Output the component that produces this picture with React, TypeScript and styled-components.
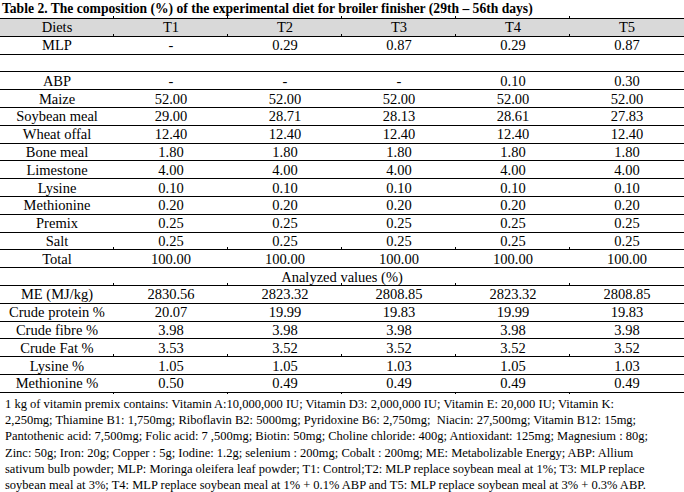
import React from "react";
import styled, { createGlobalStyle, css } from "styled-components";

const Global = createGlobalStyle`
  html, body { margin: 0; padding: 0; background: #ffffff; }
  body { font-family: "Liberation Serif", "Times New Roman", serif; color: #000; }
`;

const Page = styled.div`
  width: 684px;
  height: 492px;
  overflow: hidden;
  background: #fff;
`;

const Title = styled.div`
  height: 18px;
  padding-left: 2px;
  font-weight: bold;
  font-size: 13.6px;
  line-height: 17px;
  white-space: nowrap;
`;

const Table = styled.table`
  width: 684px;
  table-layout: fixed;
  border-collapse: collapse;
  font-size: 14.5px;
`;

const Row = styled.tr<{ $head?: boolean }>`
  height: 17.8px;
  background: ${(p) => (p.$head ? "#d9d9d9" : "transparent")};
`;

const tick = css`
  content: "";
  position: absolute;
  left: -1px;
  width: 1px;
  height: 2px;
  background: #000;
`;

const Cell = styled.td<{ $tickTop?: boolean; $tickBottom?: boolean }>`
  position: relative;
  border-top: 1px solid #000;
  border-bottom: 1px solid #000;
  padding: 0;
  text-align: center;
  vertical-align: middle;
  line-height: 16px;
  white-space: nowrap;

  &:not(:first-child)::before {
    ${(p) => (p.$tickTop ? tick : "")}
    top: -3px;
  }
  &:not(:first-child)::after {
    ${(p) => (p.$tickBottom ? tick : "")}
    bottom: -2px;
  }
`;

const Notes = styled.div`
  padding: 3px 0 0 5px;
  font-size: 12.5px;
  line-height: 16.3px;
  white-space: nowrap;
`;

const NoteLine = styled.div``;

type R = [string, ...string[]];

const top: R[] = [
  ["MLP", "-", "0.29", "0.87", "0.29", "0.87"],
  ["", "", "", "", "", ""],
  ["ABP", "-", "-", "-", "0.10", "0.30"],
  ["Maize", "52.00", "52.00", "52.00", "52.00", "52.00"],
  ["Soybean meal", "29.00", "28.71", "28.13", "28.61", "27.83"],
  ["Wheat offal", "12.40", "12.40", "12.40", "12.40", "12.40"],
  ["Bone meal", "1.80", "1.80", "1.80", "1.80", "1.80"],
  ["Limestone", "4.00", "4.00", "4.00", "4.00", "4.00"],
  ["Lysine", "0.10", "0.10", "0.10", "0.10", "0.10"],
  ["Methionine", "0.20", "0.20", "0.20", "0.20", "0.20"],
  ["Premix", "0.25", "0.25", "0.25", "0.25", "0.25"],
  ["Salt", "0.25", "0.25", "0.25", "0.25", "0.25"],
  ["Total", "100.00", "100.00", "100.00", "100.00", "100.00"],
];

const analyzed: R[] = [
  ["ME (MJ/kg)", "2830.56", "2823.32", "2808.85", "2823.32", "2808.85"],
  ["Crude protein %", "20.07", "19.99", "19.83", "19.99", "19.83"],
  ["Crude fibre %", "3.98", "3.98", "3.98", "3.98", "3.98"],
  ["Crude Fat %", "3.53", "3.52", "3.52", "3.52", "3.52"],
  ["Lysine %", "1.05", "1.05", "1.03", "1.05", "1.03"],
  ["Methionine %", "0.50", "0.49", "0.49", "0.49", "0.49"],
];

const notes = [
  "1 kg of vitamin premix contains: Vitamin A:10,000,000 IU; Vitamin D3: 2,000,000 IU; Vitamin E: 20,000 IU; Vitamin K:",
  "2,250mg; Thiamine B1: 1,750mg; Riboflavin B2: 5000mg; Pyridoxine B6: 2,750mg;\u00a0 Niacin: 27,500mg; Vitamin B12: 15mg;",
  "Pantothenic acid: 7,500mg; Folic acid: 7 ,500mg; Biotin: 50mg; Choline chloride: 400g; Antioxidant: 125mg; Magnesium : 80g;",
  "Zinc: 50g; Iron: 20g; Copper : 5g; Iodine: 1.2g; selenium : 200mg; Cobalt : 200mg; ME: Metabolizable Energy; ABP: Allium",
  "sativum bulb powder; MLP: Moringa oleifera leaf powder; T1: Control;T2: MLP replace soybean meal at 1%; T3: MLP replace",
  "soybean meal at 3%; T4: MLP replace soybean meal at 1% + 0.1% ABP and T5: MLP replace soybean meal at 3% + 0.3% ABP.",
];

const tickTopRows = new Set(["MLP", "Total", "ME (MJ/kg)", "Lysine %"]);

const DataRow = ({ r, last }: { r: R; last?: boolean }) => (
  <Row>
    {r.map((c, i) => (
      <Cell key={i} $tickTop={tickTopRows.has(r[0])} $tickBottom={last}>
        {c}
      </Cell>
    ))}
  </Row>
);

export default function App() {
  return (
    <Page>
      <Global />
      <Title>
        Table 2. The composition (%) of the experimental diet for broiler finisher (29th – 56th days)
      </Title>
      <Table>
        <colgroup>
          {[0, 1, 2, 3, 4, 5].map((i) => (
            <col key={i} style={{ width: 114 }} />
          ))}
        </colgroup>
        <tbody>
          <Row $head>
            {["Diets", "T1", "T2", "T3", "T4", "T5"].map((h) => (
              <Cell key={h} $tickTop>
                {h}
              </Cell>
            ))}
          </Row>
          {top.map((r, i) => (
            <DataRow key={"t" + i} r={r} />
          ))}
          <Row>
            <Cell colSpan={6}>Analyzed values (%)</Cell>
          </Row>
          {analyzed.map((r, i) => (
            <DataRow key={"a" + i} r={r} last={i === analyzed.length - 1} />
          ))}
        </tbody>
      </Table>
      <Notes>
        {notes.map((n, i) => (
          <NoteLine key={i}>{n}</NoteLine>
        ))}
      </Notes>
    </Page>
  );
}
